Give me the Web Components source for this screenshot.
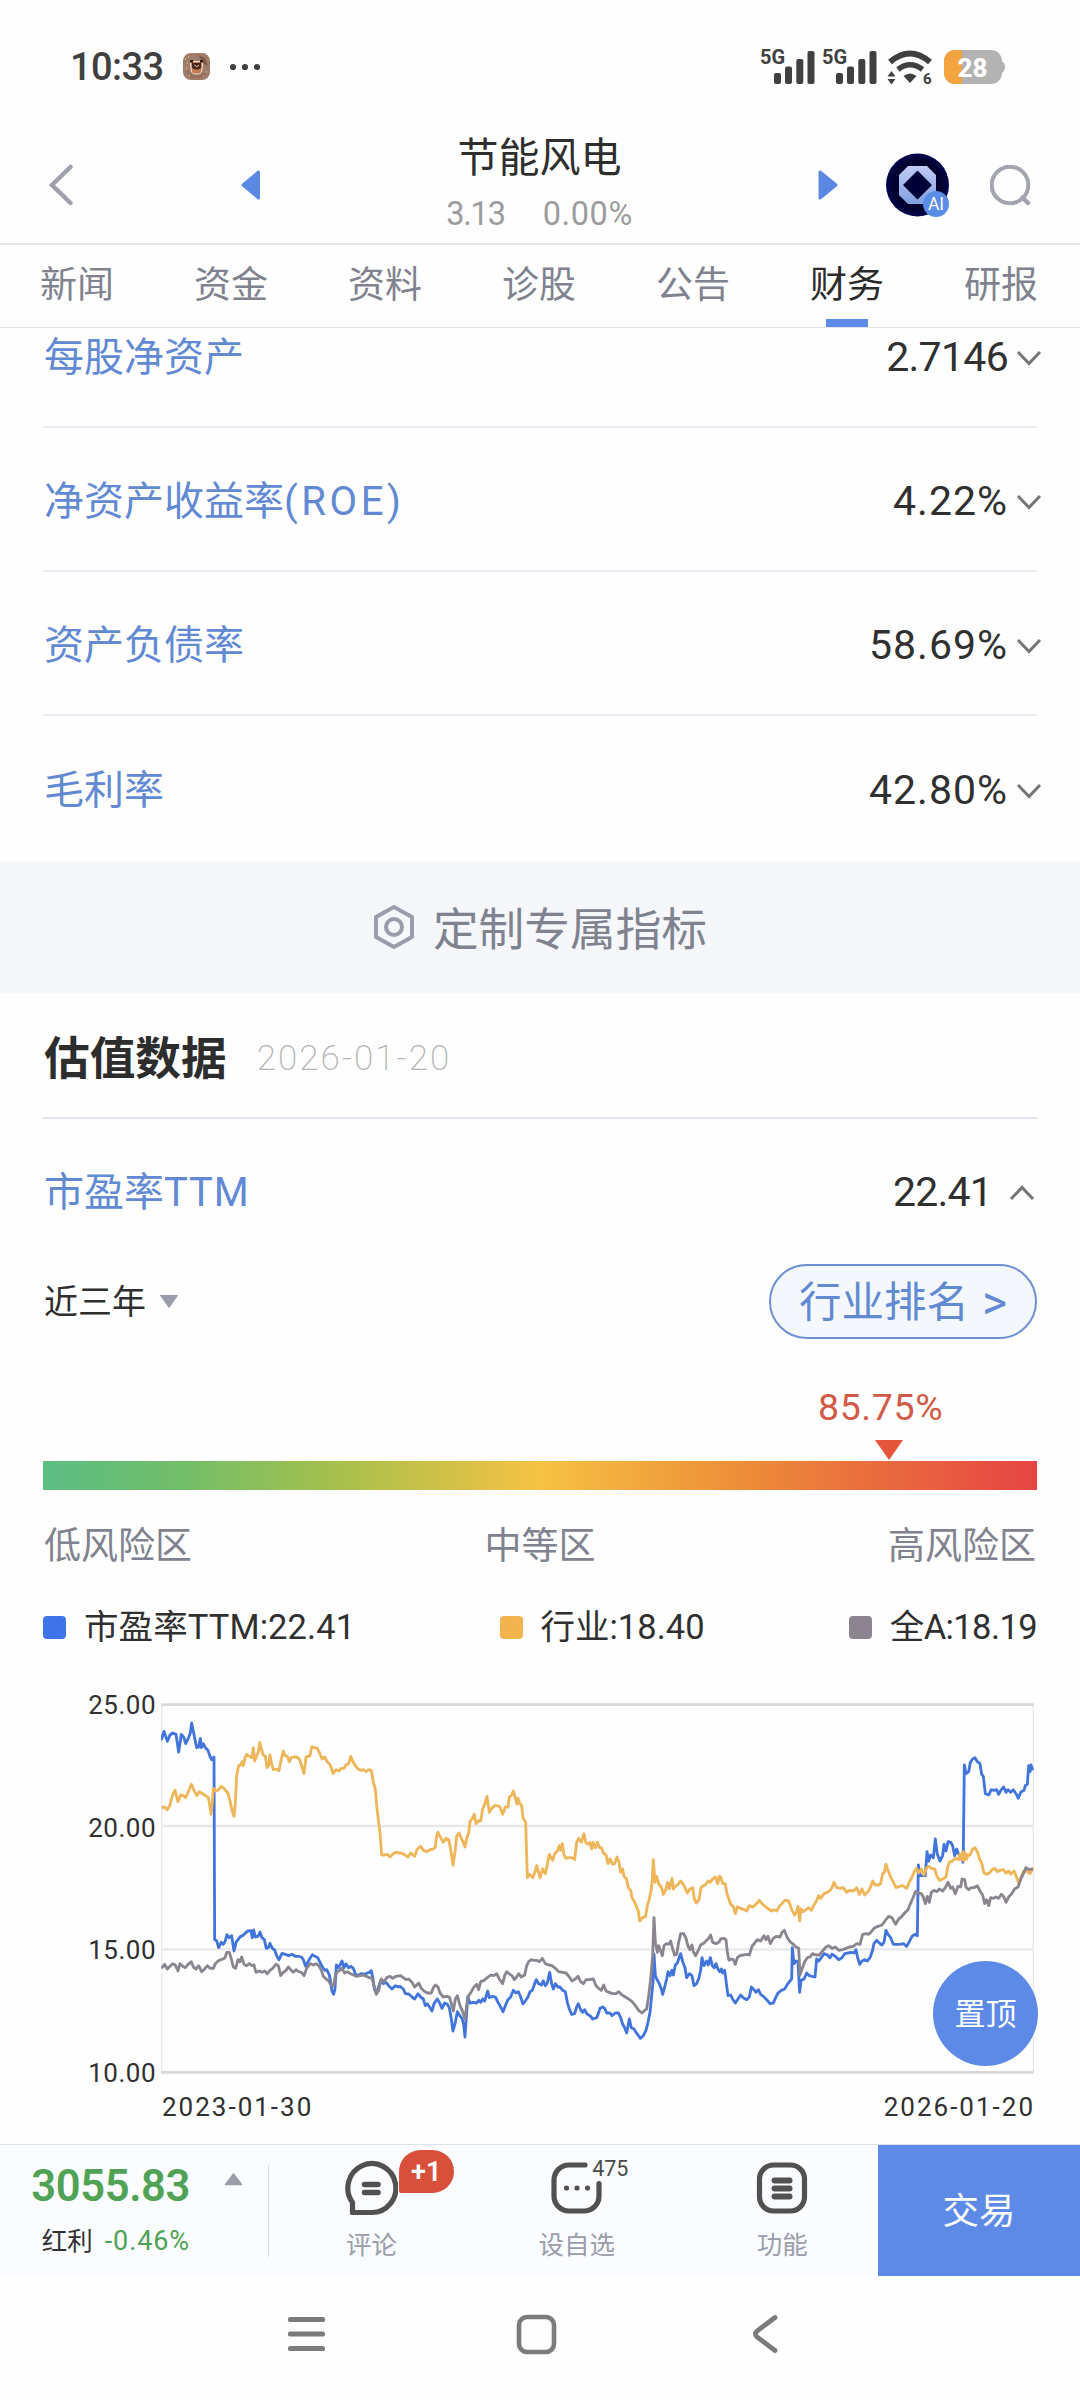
<!DOCTYPE html>
<html lang="zh-CN">
<head>
<meta charset="UTF-8">
<title>节能风电</title>
<style>
  html, body {
    margin: 0;
    padding: 0;
  }

  body {
    position: relative;
    display: flex;
    flex-direction: column;
    width: 1080px;
    height: 2400px;
    overflow: hidden;
    background: #fefefe;
    color: #303133;
    font-family: Roboto, "Noto Sans CJK SC", sans-serif;
    --blue: #5d8ae6;
    --link: #6289d3;
    --muted: #80838f;
    --line: #e2e3ec;
  }

  main {
    height: 1816px;
    overflow: hidden;
  }

  .metrics {
    margin-top: -44px;
  }
</style>
</head>
<body>
  <status-bar time="10:33" battery="28"></status-bar>
  <stock-header name="节能风电" price="3.13" change="0.00%"></stock-header>
  <tab-strip active="财务"></tab-strip>

  <main>
    <div class="metrics">
      <metric-row value="2.7146" spacing="-.7">每股净资产</metric-row>
      <metric-row value="4.22%" spacing="1">净资产收益率<span style="letter-spacing:3.6px">(ROE)</span></metric-row>
      <metric-row value="58.69%" spacing="1">资产负债率</metric-row>
      <metric-row value="42.80%" spacing="1" last>毛利率</metric-row>
    </div>
    <customize-band>定制专属指标</customize-band>
    <section-title date="2026-01-20">估值数据</section-title>
    <metric-row value="22.41" spacing="-.8" open>市盈率<span style="letter-spacing:.9px">TTM</span></metric-row>
    <range-toolbar></range-toolbar>
    <risk-gauge value="85.75%"></risk-gauge>
    <chart-legend></chart-legend>
    <valuation-chart></valuation-chart>
  </main>

  <bottom-bar></bottom-bar>
  <nav-bar></nav-bar>
  <top-button>置顶</top-button>

<script>
/** Small base class: attaches the shadow root and renders once */
class BaseElement extends HTMLElement {
  constructor() {
    super();
    this.attachShadow({ mode: 'open' });
  }

  connectedCallback() {
    this.shadowRoot.innerHTML = this.template();
  }

  attr(name) {
    return this.getAttribute(name) || '';
  }
}

/** System status bar */
class StatusBar extends BaseElement {
  signal() {
    return `
      <svg width="56" height="36" viewBox="0 0 56 36" fill="#404040">
        <text x="0" y="14.500" font-size="20" font-weight="700">5G</text>
        <rect x="14" y="24" width="7" height="11" rx="2"/>
        <rect x="25" y="17.500" width="7" height="17.500" rx="2"/>
        <rect x="36.300" y="10" width="7" height="25" rx="2"/>
        <rect x="47.500" y="2" width="7" height="33" rx="2"/>
      </svg>`;
  }

  template() {
    return `
      <style>
        :host {
          display: flex;
          align-items: center;
          box-sizing: border-box;
          height: 127px;
          padding: 6px 75px 0 70px;
          color: #404040;
        }
        .time { font-size: 38px; font-weight: 500; line-height: 44px; width: 113px; letter-spacing: -.6px; }
        .dots { margin-left: 20px; }
        .spacer { flex: 1; }
        svg { display: block; flex: none; overflow: visible; }
        .signals { display: flex; gap: 6px; }
        .wifi { margin: 0 11px 0 9px; }
      </style>
      <span class="time">${this.attr('time')}</span>
      <svg width="27" height="27" viewBox="0 0 27 27">
        <rect width="27" height="27" rx="8" fill="#a17c69"/>
        <path d="M15 2l7 3 3 8-4-2z" fill="#7d5b4c"/>
        <path d="M3 18l5 7 12 0 4-5z" fill="#93705e"/>
        <path d="M2 6h1M4 10h1M3 15h1M6 22h1M20 23h1M23 19h1M5 4h1" stroke="#e5cdbf" stroke-width="1"/>
        <path d="M7.500 8l3 .5h5l3.500-.5.5 4-1 7-2 2h-6l-2-2-.8-7z" fill="#c47b52" stroke="#f4e4d6" stroke-width="1"/>
        <path d="M9 10h9v5q-4 3-9 0z" fill="#4a2718"/>
        <path d="M7 7h3v2.500H7zM17 7h3v2.500h-3z" fill="#2d1c16"/>
        <path d="M11.500 12l2 1.800 2.500-1.500" fill="none" stroke="#f0d7c4"/>
      </svg>
      <svg class="dots" width="30" height="8" viewBox="0 0 30 8" fill="#404040">
        <circle cx="3" cy="4" r="3.100"/><circle cx="15" cy="4" r="3.100"/><circle cx="27" cy="4" r="3.100"/>
      </svg>
      <span class="spacer"></span>
      <div class="signals">${this.signal()}${this.signal()}</div>
      <svg class="wifi" width="46" height="36" viewBox="0 0 46 36">
        <path d="M3 13Q23-4 43 13" fill="none" stroke="#404040" stroke-width="6"/>
        <path d="M11 20.500Q23 11 35.500 20.500" fill="none" stroke="#404040" stroke-width="5.500"/>
        <path d="M16.500 27Q23 22 29.500 27L23 34z" fill="#404040"/>
        <path d="M.5 27.500L4.500 22l4 5.500zM.5 30l4 5.500 4-5.500z" fill="#404040"/>
        <text x="36" y="35" font-size="15" font-weight="700" fill="#404040">6</text>
      </svg>
      <svg width="61" height="34" viewBox="0 0 61 34">
        <path d="M54 11h3q4 1 4 6t-4 6h-3z" fill="#b3b3b3"/>
        <rect width="58" height="34" rx="11" fill="#b3b3b3"/>
        <path d="M18 0v34h-7a11 11 0 0 1-11-11v-12a11 11 0 0 1 11-11z" fill="#f4a43e"/>
        <text x="28.500" y="26.500" font-size="26" font-weight="800" fill="#fff" text-anchor="middle">${this.attr('battery')}</text>
      </svg>
    `;
  }
}

/** Title bar with the previous / next stock arrows */
class StockHeader extends BaseElement {
  template() {
    return `
      <style>
        :host {
          display: flex;
          align-items: center;
          box-sizing: border-box;
          height: 118px;
          padding: 0 49px 0 48px;
          border-bottom: 2px solid #e4e5e9;
        }
        svg { display: block; flex: none; }
        .prev { margin-left: 168px; }
        .title { flex: 1; text-align: center; }
        .name { font-size: 41px; line-height: 58px; padding-top: 2px; margin-bottom: -2px; color: #2e2e2e; }
        .quote {
          display: flex;
          justify-content: center;
          gap: 38px;
          font-size: 32.500px;
          line-height: 58px;
          color: #9c9c9e;
        }
        .price { letter-spacing: -1.200px; }
        .change { letter-spacing: .6px; }
        .ai { margin: 0 41px 0 48px; }
      </style>
      <svg width="25" height="44" viewBox="0 0 25 44">
        <path d="M22.500 4L4 22l18.500 18" fill="none" stroke="#a0a2ab" stroke-width="4.500" stroke-linecap="round"/>
      </svg>
      <svg class="prev" width="20" height="30" viewBox="0 0 20 30">
        <path d="M17.500 2v26L2 15z" fill="#5b88e3" stroke="#5b88e3" stroke-width="3" stroke-linejoin="round"/>
      </svg>
      <div class="title">
        <div class="name">${this.attr('name')}</div>
        <div class="quote"><span class="price">${this.attr('price')}</span><span class="change">${this.attr('change')}</span></div>
      </div>
      <svg width="20" height="30" viewBox="0 0 20 30">
        <path d="M2 2v26l16-13z" fill="#5b88e3" stroke="#5b88e3" stroke-width="3" stroke-linejoin="round"/>
      </svg>
      <svg class="ai" width="63" height="64" viewBox="0 0 63 64">
        <defs>
          <radialGradient id="sky" cx=".5" cy=".5" r=".55">
            <stop offset="0" stop-color="#00003a"/>
            <stop offset=".7" stop-color="#02022e"/>
            <stop offset="1" stop-color="#05055e"/>
          </radialGradient>
          <linearGradient id="oct" x1="0" y1="0" x2="0" y2="1">
            <stop offset="0" stop-color="#c2ccf6"/>
            <stop offset="1" stop-color="#7e9fdf"/>
          </linearGradient>
        </defs>
        <circle cx="31.500" cy="32" r="31.500" fill="url(#sky)"/>
        <path d="M22 13h19l9 9v20l-9 9H22l-9-9V22zM31.500 17.500L17 32l14.500 14.500L46 32z" fill="url(#oct)" fill-rule="evenodd"/>
        <circle cx="50" cy="51" r="13" fill="#5b8ce6"/>
        <text x="50" y="57" font-size="17.500" fill="#fff" text-anchor="middle">AI</text>
      </svg>
      <svg width="41" height="42" viewBox="0 0 41 42">
        <circle cx="20" cy="21" r="18.300" fill="none" stroke="#a3a5ae" stroke-width="4"/>
        <path d="M32.500 33.500l5.500 5.500" stroke="#a3a5ae" stroke-width="4.500" stroke-linecap="round"/>
      </svg>
    `;
  }
}

/** Section tabs */
class TabStrip extends BaseElement {
  template() {
    const tabs = ['新闻', '资金', '资料', '诊股', '公告', '财务', '研报'];
    const items = tabs.map(tab =>
      `<div class="tab${tab === this.attr('active') ? ' active' : ''}">${tab}</div>`
    ).join('');

    return `
      <style>
        :host {
          display: flex;
          box-sizing: border-box;
          height: 83px;
          padding-right: 2px;
          border-bottom: 1px solid #e2e3e6;
        }
        .tab {
          flex: 1;
          display: flex;
          flex-direction: column;
          align-items: center;
          justify-content: space-between;
          font-size: 37px;
          line-height: 81px;
          height: 82px;
          color: var(--muted);
        }
        .active { color: #2b2b2b; }
        .active::after {
          content: "";
          flex: none;
          width: 42px;
          height: 8px;
          margin-top: -8px;
          background: var(--blue);
        }
      </style>
      ${items}
    `;
  }
}

/** Indicator name on the left, value and chevron on the right */
class MetricRow extends BaseElement {
  template() {
    const open = this.hasAttribute('open');
    const last = this.hasAttribute('last');
    return `
      <style>
        :host {
          display: flex;
          align-items: center;
          box-sizing: border-box;
          height: ${last ? 145 : 144}px;
          margin: 0 43px;
          padding: ${last || open ? 2 : 4}px 0 0 1px;
          font-size: 40px;
          line-height: 60px;
          ${open || last ? '' : 'border-bottom: 2px solid #e9eaf1;'}
        }
        .label { flex: 1; padding-top: 2px; color: var(--link); }
        .value { font-size: 41px; color: #303030; letter-spacing: ${this.attr('spacing')}px; }
        svg {
          display: block;
          margin: 2px ${open ? '2px 0 17px' : '-5px 0 8px'};
        }
      </style>
      <span class="label"><slot></slot></span>
      <span class="value">${this.attr('value')}</span>
      <svg width="26" height="16" viewBox="0 0 26 16">
        <path d="${open ? 'M2 14L13 2.500 24 14' : 'M2 2l11 11.500L24 2'}" fill="none" stroke="#757575" stroke-width="3"/>
      </svg>
    `;
  }
}

class CustomizeBand extends BaseElement {
  template() {
    return `
      <style>
        :host {
          display: flex;
          align-items: center;
          justify-content: center;
          gap: 18px;
          height: 132px;
          background: #f5f7fb;
          color: var(--muted);
          font-size: 45.700px;
          line-height: 66px;
        }
        svg { display: block; }
        span { padding-top: 7px; }
      </style>
      <svg width="42" height="46" viewBox="0 0 42 46" fill="none" stroke="#9a9dab" stroke-width="4">
        <path d="M21 3L39 13v20L21 43 3 33V13z" stroke-linejoin="round"/>
        <circle cx="21" cy="23" r="8"/>
      </svg>
      <span><slot></slot></span>
    `;
  }
}

class SectionTitle extends BaseElement {
  template() {
    return `
      <style>
        :host {
          display: flex;
          align-items: center;
          box-sizing: border-box;
          height: 126px;
          margin: 0 43px;
          padding-top: 7px;
          border-bottom: 2px solid var(--line);
          line-height: 66px;
        }
        .name { font-size: 45.700px; font-weight: 700; color: #2d2d2d; padding: 2px 0 0 1px; }
        .date {
          margin-left: 30px;
          font-size: 35px;
          font-weight: 200;
          letter-spacing: 2px;
          color: #b5b5b5;
        }
      </style>
      <span class="name"><slot></slot></span>
      <span class="date">${this.attr('date')}</span>
    `;
  }
}

class RangeToolbar extends BaseElement {
  template() {
    return `
      <style>
        :host {
          display: flex;
          align-items: center;
          justify-content: space-between;
          height: 76px;
          margin: 0 43px;
        }
        .range {
          display: flex;
          align-items: center;
          gap: 13px;
          font-size: 34px;
          line-height: 50px;
          color: #2f2f2f;
          padding-left: 1px;
        }
        .range span { padding-top: 2px; }
        .rank {
          display: flex;
          align-items: center;
          box-sizing: border-box;
          width: 268px;
          height: 75px;
          padding: 3px 24px 0 28px;
          border: 2px solid #6d90d4;
          border-radius: 38px;
          background: #f4f7fc;
          color: var(--link);
          font-size: 42.500px;
          line-height: 60px;
          gap: 13px;
        }
        .gt { font-size: 48px; }
      </style>
      <div class="range">
        <span>近三年</span>
        <svg width="20" height="15" viewBox="0 0 20 15">
          <path d="M1.500 1.500h17L10 13.500z" fill="#9a9ca9" stroke="#9a9ca9" stroke-linejoin="round"/>
        </svg>
      </div>
      <div class="rank"><span>行业排名</span><span class="gt">&gt;</span></div>
    `;
  }
}

/** Green to red risk scale with the pointer above it */
class RiskGauge extends BaseElement {
  template() {
    return `
      <style>
        :host { display: block; margin: 0 43px; height: 261px; }
        .value {
          padding: 44px 0 0 775px;
          font-size: 37.500px;
          line-height: 48px;
          letter-spacing: .6px;
          color: #d15b47;
        }
        .pointer { display: block; margin: 9px 0 1px 832px; }
        .bar {
          height: 29px;
          background: linear-gradient(90deg, #5bbe83 0%, #72be69 14%, #a8c04c 30%, #f6c243 50%, #ed8e38 70%, #e64444 100%);
        }
        .zones {
          display: flex;
          justify-content: space-between;
          padding: 1px 1px 0;
          font-size: 37px;
          line-height: 112px;
          color: var(--muted);
        }
      </style>
      <div class="value">${this.attr('value')}</div>
      <svg class="pointer" width="28" height="20" viewBox="0 0 28 20">
        <path d="M0 0h28L14 20z" fill="#e5553c"/>
      </svg>
      <div class="bar"></div>
      <div class="zones"><span>低风险区</span><span>中等区</span><span>高风险区</span></div>
    `;
  }
}

class ChartLegend extends BaseElement {
  template() {
    const entries = [
      ['市盈率TTM:22.41', '#3f73e9', .1],
      ['行业:18.40', '#f3b450', 0],
      ['全A:18.19', '#8b8390', -.6]
    ];
    return `
      <style>
        :host {
          display: flex;
          justify-content: space-between;
          height: 54px;
          margin: 0 43px;
          font-size: 34.500px;
          line-height: 56px;
          color: #303030;
        }
        .entry { display: flex; align-items: center; gap: 18px; }
        i { width: 23px; height: 23px; border-radius: 4px; }
      </style>
      ${entries.map(([text, color, spacing]) =>
        `<span class="entry" style="letter-spacing:${spacing}px"><i style="background:${color}"></i>${text}</span>`
      ).join('')}
    `;
  }
}

// Each series is kept in three consecutive slices, 960 units wide.
const SLICE = 960;
const SERIES = [
  {
    color: '#4175dc',
    slices: [
      '304,213 312,187 322,217 330,198 338,192 348,196 356,249 364,196 372,206 377,224 385,208 391,192 395,162 401,192 410,236 416,234 421,208 424,236 430,224 436,236 444,244 450,262 455,272 462,264 464,812 470,815 476,836 484,820 490,826 495,818 501,797 507,806 515,800 522,846 529,818 536,810 541,803 548,800 556,792 564,786 573,785 577,806 581,783 586,804 594,802 600,789 606,806 613,812 619,838 625,836 630,823 637,838 644,843 650,860 657,872 666,853 676,856 686,860 696,856 706,862 716,862 724,864 730,872 737,892 744,878 750,868 757,857 765,862 773,866 781,882 786,892 794,904 800,902 808,918 812,940 816,966 821,976 825,960 829,888 836,896 841,886 846,876 852,896 858,884 866,896 873,892 880,898 887,918 896,918 905,914 914,916 922,912 928,910 934,905 939,930 943,960 950,972 957,950 962,934 970,944 978,940 986,950 996,960 1006,950 1014,954',
      '60,952 70,960 76,974 86,975 96,984 104,990 114,974 122,984 130,990 136,1010 142,1004 150,1016 156,1026 162,1004 172,990 180,1004 186,1018 194,1002 202,1006 208,1016 214,1050 219,1086 226,1060 232,1028 238,1038 246,1048 251,1066 255,1104 260,1030 263,984 270,1002 280,1000 290,1002 296,994 302,1000 308,990 314,996 323,966 328,986 338,982 346,984 354,1000 362,1014 369,1028 376,1010 384,992 392,984 400,964 408,972 415,968 422,984 429,1005 436,996 444,984 450,968 457,964 464,944 469,932 476,944 484,948 490,936 496,950 502,942 509,910 515,944 520,960 526,944 534,954 540,954 548,964 556,968 562,1000 568,1020 575,1036 584,1034 590,1014 595,1004 602,1022 608,1030 614,1022 620,1034 630,1040 638,1050 650,1046 655,1034 660,1018 668,1014 674,1018 680,1032 690,1032 696,1040 706,1032 715,1032 722,1046 728,1066 734,1076 740,1092 748,1050 754,1076 762,1080 768,1090 774,1098 781,1108 790,1100 798,1084 804,1060 810,1030 815,980 819,940 822,856 826,920 832,934 838,944 844,960 848,976 855,950 860,930 864,908 870,920 876,904 880,918 886,888 892,882 898,864 902,854 908,878 915,896 920,926 928,914 936,920 942,950 950,944 957,926 962,904 966,866 972,890 980,876 985,888 991,866 997,890 1003,896 1008,884 1014,900 1019,908',
      '64,900 68,912 74,904 80,950 84,980 92,978 98,990 106,1002 114,990 122,978 130,986 140,992 148,984 154,954 162,962 168,970 175,962 182,976 192,984 200,992 210,1004 220,1002 226,988 234,972 244,964 254,960 262,946 270,936 275,930 277,836 282,884 288,876 294,880 299,970 303,934 312,930 320,912 328,920 336,922 345,924 350,870 356,876 364,866 372,854 382,858 390,866 396,856 406,862 416,872 426,866 434,854 444,852 454,850 462,852 468,842 473,866 479,886 486,876 494,872 502,876 510,866 517,846 522,824 530,814 538,822 546,828 552,820 558,784 564,796 572,806 580,826 590,826 600,826 610,824 620,832 628,818 636,802 644,796 652,800 655,588 660,620 668,620 676,620 681,548 686,576 692,558 700,566 706,510 712,556 720,576 728,560 732,526 738,546 744,518 752,520 758,530 764,560 770,540 776,556 784,560 789,580 790,540 793,288 798,314 806,308 811,280 818,270 825,266 832,278 840,284 845,316 850,322 856,374 866,378 874,362 882,364 890,362 896,376 904,362 911,354 918,370 924,362 932,370 940,362 948,374 955,388 962,370 972,364 976,350 982,346 986,290 990,308 993,288 997,300 1000,298'
    ]
  },
  {
    color: '#efb659',
    slices: [
      '305,416 314,414 322,422 330,408 337,380 345,364 354,398 362,378 370,380 377,386 386,366 394,346 401,362 410,380 418,368 428,374 436,380 444,384 448,400 453,436 457,400 460,358 468,366 476,362 484,352 492,358 498,366 504,372 510,396 516,424 522,442 526,400 530,320 536,290 542,288 546,278 550,290 555,266 560,256 568,262 576,266 580,236 584,276 590,260 595,250 599,220 604,240 610,258 616,262 621,296 626,290 630,258 634,280 640,302 648,300 657,305 664,270 670,246 675,260 682,262 688,278 694,266 702,264 710,264 718,270 724,288 732,314 738,264 744,262 750,260 755,234 764,236 772,238 779,252 786,270 794,264 800,276 808,284 814,296 819,314 828,302 836,306 844,298 852,298 858,288 866,284 872,262 878,276 886,290 894,300 902,304 910,302 918,308 926,302 934,304 940,340 946,360 950,410 956,460 960,490 965,558 974,558 982,556 990,564 998,556 1008,550',
      '62,552 72,556 84,564 92,552 104,562 112,540 122,532 130,544 140,548 150,542 160,540 166,534 170,500 174,490 182,506 190,520 198,508 206,512 212,540 219,588 225,550 230,502 237,492 244,508 250,520 255,534 261,504 266,494 270,458 276,450 283,436 288,464 295,456 302,456 308,420 315,404 321,382 328,430 335,418 344,410 352,410 360,414 368,436 376,414 384,414 388,384 394,380 400,366 405,382 411,406 414,388 420,404 425,410 429,446 437,460 442,626 448,616 458,626 464,612 470,590 475,608 480,626 488,600 496,614 502,586 508,556 518,574 524,554 532,546 538,530 542,544 547,524 552,558 558,568 568,566 576,566 584,572 590,520 596,508 604,520 612,494 617,520 624,526 630,520 635,540 640,520 646,536 653,520 658,536 664,536 670,552 678,558 684,584 690,570 698,586 704,584 711,564 717,580 722,610 728,600 732,622 740,630 745,656 752,664 756,686 764,700 770,714 775,726 779,756 788,746 797,742 802,710 808,690 814,660 817,630 820,572 825,640 830,622 837,646 844,654 850,676 857,662 863,640 868,660 876,628 880,660 886,652 894,646 902,636 910,646 916,658 922,672 930,660 938,656 943,690 949,702 957,692 963,656 970,650 976,648 984,636 990,640 998,630 1006,624 1013,644 1018,622',
      '62,624 68,644 76,644 80,670 85,686 92,706 100,712 106,734 112,714 122,718 132,722 140,726 148,710 158,714 166,708 178,694 188,706 198,714 206,720 214,726 222,722 230,726 238,712 246,704 254,694 264,694 270,706 276,724 284,738 290,728 294,712 299,756 303,720 310,728 318,722 326,716 334,724 342,708 350,694 356,680 362,688 372,674 382,670 394,660 402,640 410,656 420,658 430,656 440,670 450,664 460,666 470,656 478,676 486,660 494,678 504,668 512,654 518,636 526,648 534,648 542,644 548,614 553,610 558,586 564,604 572,624 580,640 588,656 598,652 608,650 620,658 628,640 638,620 644,606 650,598 656,612 664,600 672,618 680,596 686,592 694,598 704,600 710,620 718,634 728,630 738,624 744,590 750,578 758,576 766,568 776,572 779,556 784,572 788,548 792,576 796,552 800,570 804,558 810,558 818,540 825,536 832,548 838,568 845,582 852,612 860,616 868,612 874,604 884,598 892,608 900,604 910,602 918,612 926,606 932,616 942,606 948,620 955,640 962,628 970,608 980,606 990,614 1000,596'
    ]
  },
  {
    color: '#8b8590',
    slices: [
      '305,898 314,886 322,900 330,892 338,884 346,888 354,906 360,884 368,892 376,896 384,886 394,878 400,894 408,900 416,890 425,908 434,900 442,890 450,898 460,898 466,884 474,876 482,872 490,870 496,864 500,850 508,850 514,870 520,894 527,898 534,872 540,878 545,864 552,886 560,890 568,884 576,890 582,888 588,910 598,906 606,910 614,906 622,914 630,904 638,898 648,886 655,890 662,920 670,910 678,904 685,894 692,902 700,910 708,902 716,908 724,910 732,920 740,898 750,884 760,888 768,884 776,890 784,904 790,922 798,930 804,934 812,946 821,950 826,920 832,908 840,904 846,898 854,912 862,908 872,914 880,918 890,922 900,920 910,918 920,922 928,926 936,928 942,950 949,976 956,964 964,930 972,938 980,926 990,922 998,928 1008,922',
      '62,920 70,926 78,932 86,930 96,940 104,954 116,942 124,958 132,966 142,972 154,972 160,956 166,948 174,954 180,972 190,984 200,982 208,984 214,1004 220,1026 226,990 232,980 240,1010 248,1028 255,1050 260,1010 266,980 274,968 282,954 290,946 296,962 302,938 312,934 322,926 332,918 340,920 350,914 358,930 368,944 374,920 380,908 390,916 396,920 403,932 410,924 416,914 424,924 434,918 440,890 446,878 454,872 462,874 470,874 478,878 487,868 496,884 506,888 516,890 526,898 536,908 548,910 558,912 568,924 576,936 586,930 594,922 602,938 610,944 618,932 628,932 640,930 648,950 656,958 664,964 671,948 678,966 688,970 698,974 708,974 716,968 726,978 736,984 746,990 756,998 766,1010 776,1024 786,1032 794,1024 800,1020 806,980 812,930 818,860 822,746 826,820 832,850 836,830 842,846 847,860 852,830 858,824 866,826 872,816 878,840 884,858 890,856 896,820 902,794 911,794 918,808 924,832 930,842 936,828 940,848 947,860 954,846 962,828 972,822 980,814 986,808 992,798 998,820 1008,824 1018,818',
      '62,810 72,808 78,812 82,850 87,874 94,870 100,872 106,886 112,866 120,860 130,858 140,856 148,858 156,832 164,822 172,812 182,816 192,800 198,812 204,802 211,824 220,808 230,802 240,804 246,790 253,784 262,806 270,818 280,826 288,834 296,838 300,918 306,900 314,878 322,866 330,864 338,854 348,858 358,858 368,846 378,834 386,830 396,838 406,834 416,844 428,842 438,838 448,834 460,832 470,824 480,826 488,796 498,794 506,796 514,788 522,778 534,772 546,768 556,754 566,742 576,746 587,766 596,750 604,744 614,732 624,722 632,702 640,684 646,668 656,672 664,674 670,684 676,704 682,682 688,700 694,670 702,664 710,668 718,660 728,666 736,656 744,640 752,658 758,654 766,674 774,652 782,654 786,630 794,632 798,654 806,662 814,656 822,656 832,650 840,666 848,678 854,704 860,692 866,710 872,686 880,688 888,684 896,688 904,676 912,684 918,700 926,684 934,676 944,660 954,654 962,632 970,614 978,596 988,602 998,600'
    ]
  }
];

/** Three-year valuation line chart */
class ValuationChart extends BaseElement {
  line({ color, slices }) {
    const points = slices.flatMap((slice, index) =>
      slice.split(' ').map(pair => {
        const [x, y] = pair.split(',').map(Number);
        return `${x + index * SLICE},${y}`;
      })
    ).join(' ');
    return `<polyline points="${points}" stroke="${color}"/>`;
  }

  template() {
    return `
      <style>
        :host {
          display: grid;
          grid-template-columns: 156px 873px;
          column-gap: 5px;
          padding-top: 48px;
          color: #303030;
          font-size: 26px;
          letter-spacing: .5px;
        }
        .scale {
          display: flex;
          flex-direction: column;
          justify-content: space-between;
          align-items: flex-end;
          margin: -10px 0 -12px;
          line-height: 26px;
        }
        .plot { display: block; }
        .dates {
          grid-column: 2;
          display: flex;
          justify-content: space-between;
          padding: 1px 0 0 1px;
          line-height: 64px;
          letter-spacing: 2px;
        }
        .dates span:last-child { margin-right: -1px; }
      </style>
      <div class="scale"><span>25.00</span><span>20.00</span><span>15.00</span><span>10.00</span></div>
      <svg class="plot" width="873" height="372" viewBox="303 99 2619 1116" fill="none">
        <path d="M305 106V1209M2920 106V1209" stroke="#e8e8ea" stroke-width="4"/>
        <path d="M303 471H2921M303 841H2921" stroke="#e8e8e9" stroke-width="7"/>
        <path d="M303 107H2921M303 1210H2921" stroke="#d9d9db" stroke-width="8"/>
        <g stroke-width="8.500" stroke-linejoin="round">${SERIES.map(series => this.line(series)).join('')}</g>
      </svg>
      <div class="dates"><span>2023-01-30</span><span>2026-01-20</span></div>
    `;
  }
}

/** Index quote, shortcuts and the trade button */
class BottomBar extends BaseElement {
  template() {
    return `
      <style>
        :host {
          display: flex;
          box-sizing: border-box;
          height: 132px;
          border-top: 1px solid #dfe1e8;
          background: #fafcff;
        }
        .index {
          display: flex;
          justify-content: space-between;
          box-sizing: border-box;
          width: 268px;
          padding-left: 31px;
        }
        .quote { display: flex; flex-direction: column; align-items: flex-end; width: 159px; color: #50a354; }
        .price { margin-top: 13px; font-size: 43.500px; font-weight: 600; line-height: 58px; letter-spacing: -.4px; }
        .change { font-size: 27px; line-height: 40px; margin-top: 5px; white-space: nowrap; letter-spacing: .9px; }
        .change b { margin-right: 12px; font-size: 25.500px; font-weight: 400; color: #303030; letter-spacing: 0; }
        .up { margin: 27px 25px 0 0; }
        .rule { width: 1px; height: 92px; margin-top: 20px; background: #dddfe6; }
        .items { display: flex; width: 617px; }
        .item {
          position: relative;
          flex: 1;
          display: flex;
          flex-direction: column;
          align-items: center;
          padding-top: 15px;
          font-size: 25.500px;
          line-height: 40px;
          color: #9b9dab;
        }
        .item svg { display: block; margin-bottom: 9px; }
        .badge {
          position: absolute;
          left: 130px;
          top: 5px;
          width: 55px;
          height: 43px;
          border-radius: 22px 22px 22px 2px;
          background: #d84f3c;
          color: #fff;
          font-size: 27px;
          font-weight: 600;
          line-height: 44px;
          text-align: center;
        }
        .count {
          position: absolute;
          left: 118px;
          top: 11px;
          font-size: 21.500px;
          line-height: 26px;
          color: #4a4a4a;
        }
        .trade {
          position: relative;
          flex: none;
          width: 202px;
          margin-left: -7px;
          background: var(--blue);
          color: #fff;
          font-size: 36.500px;
          line-height: 134px;
          height: 131px;
          text-align: center;
        }
      </style>
      <div class="index">
        <div class="quote">
          <div class="price">3055.83</div>
          <div class="change"><b>红利</b>-0.46%</div>
        </div>
        <svg class="up" width="19" height="14" viewBox="0 0 19 14">
          <path d="M1.500 12.500h16L9.500 2z" fill="#9b9dab" stroke="#9b9dab" stroke-width="1.500" stroke-linejoin="round"/>
        </svg>
      </div>
      <div class="rule"></div>
      <div class="items">
        <div class="item">
          <svg width="54" height="56" viewBox="0 0 54 56" fill="none" stroke="#515151" stroke-width="5.200" stroke-linecap="round" stroke-linejoin="round">
            <path d="M8.500 52.500V42.500A24 24.500 0 1 1 27 52.500z"/>
            <path d="M20.500 24.500h13.500M20.500 32.500h13.500" stroke-width="5.600"/>
          </svg>
          <span>评论</span>
          <span class="badge">+1</span>
        </div>
        <div class="item">
          <svg width="52" height="56" viewBox="0 0 52 56" fill="none" stroke="#515151" stroke-width="5.200" stroke-linecap="round">
            <path d="M34 5H18A15 15 0 0 0 3 20V36A15 15 0 0 0 18 51H33A15 15 0 0 0 48 36V23.500"/>
            <path d="M15.500 28h.01M26 28h.01M36.500 28h.01"/>
          </svg>
          <span>设自选</span>
          <span class="count">475</span>
        </div>
        <div class="item">
          <svg width="52" height="56" viewBox="0 0 52 56" fill="none" stroke="#515151" stroke-width="5.200" stroke-linecap="round">
            <rect x="3.500" y="5" width="45" height="46" rx="14"/>
            <path d="M18.500 20.500h15M18.500 28.500h15M18.500 36.500h15" stroke-width="6"/>
          </svg>
          <span>功能</span>
        </div>
      </div>
      <div class="trade">交易</div>
    `;
  }
}

/** Android navigation keys */
class NavBar extends BaseElement {
  template() {
    return `
      <style>
        :host {
          display: flex;
          justify-content: space-between;
          align-items: center;
          box-sizing: border-box;
          height: 124px;
          padding: 0 302px 8px 287px;
        }
        svg { display: block; }
        .home { margin-right: 7px; }
      </style>
      <svg width="39" height="42" viewBox="0 0 39 42" stroke="#7b7b7b" stroke-width="5.200" stroke-linecap="round">
        <path d="M3.500 6.500h32M3.500 21h32M3.500 35.500h32"/>
      </svg>
      <svg class="home" width="42" height="42" viewBox="0 0 42 42" fill="none" stroke="#7b7b7b" stroke-width="4.600">
        <rect x="4" y="4" width="35" height="35" rx="8"/>
      </svg>
      <svg width="26" height="42" viewBox="0 0 26 42" fill="none" stroke="#7b7b7b" stroke-width="4.800" stroke-linecap="round">
        <path d="M23 4.500L5 18q-3 3 0 6l18 13.500"/>
      </svg>
    `;
  }
}

/** Round pin-to-top button floating over the chart */
class TopButton extends BaseElement {
  template() {
    return `
      <style>
        :host {
          position: absolute;
          left: 933px;
          top: 1961px;
          width: 105px;
          height: 105px;
          border-radius: 50%;
          background: var(--blue);
          color: #fff;
          font-size: 31px;
          line-height: 107px;
          text-align: center;
        }
      </style>
      <slot></slot>
    `;
  }
}

customElements.define('status-bar', StatusBar);
customElements.define('stock-header', StockHeader);
customElements.define('tab-strip', TabStrip);
customElements.define('metric-row', MetricRow);
customElements.define('customize-band', CustomizeBand);
customElements.define('section-title', SectionTitle);
customElements.define('range-toolbar', RangeToolbar);
customElements.define('risk-gauge', RiskGauge);
customElements.define('chart-legend', ChartLegend);
customElements.define('valuation-chart', ValuationChart);
customElements.define('bottom-bar', BottomBar);
customElements.define('nav-bar', NavBar);
customElements.define('top-button', TopButton);
</script>
</body>
</html>
